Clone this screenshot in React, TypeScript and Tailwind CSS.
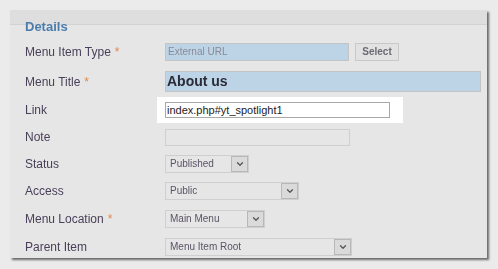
import { ChevronDown } from "lucide-react";

const font = { fontFamily: '"Liberation Sans", Arial, sans-serif' };

function Label({ text, req }: { text: string; req?: boolean }) {
  return (
    <div className="w-[140px] shrink-0 pl-[15px] text-[12px] text-[#483f58] blur-[0.5px]">
      {text}
      {req && <span className="ml-[4px] text-[#e0894a]">*</span>}
    </div>
  );
}

function Dropdown({ value, w }: { value: string; w: string }) {
  return (
    <div className={`flex h-[18px] items-stretch border border-[#cfcfcf] bg-[#e6e6e6] blur-[0.5px] ${w}`}>
      <div className="flex-1 pl-[4px] text-[10px] leading-[16px] text-[#5a5466]">{value}</div>
      <div className="flex w-[17px] items-center justify-center border border-[#b8b8b8] bg-[#dadada]">
        <ChevronDown className="size-[10px] text-[#555]" strokeWidth={3} />
      </div>
    </div>
  );
}

export default function App() {
  return (
    <div className="h-[269px] w-[498px] bg-[#ebebeb] pl-[10px] pt-[10px]" style={font}>
      <div className="h-[248px] w-[477px] bg-[#e6e6e6] shadow-[2px_2px_2px_rgba(0,0,0,0.55)]">
        {/* header band */}
        <div className="h-[15px] border-b border-[#d2d2d2] bg-[#dedede] blur-[0.5px]" />
        <div className="-mt-[5px] h-[18px] pl-[15px] text-[13px] font-bold leading-[13px] text-[#4a7dab] blur-[0.5px]">
          Details
        </div>

        {/* Menu Item Type */}
        <div className="flex h-[28px] items-center">
          <Label text="Menu Item Type" req />
          <div className="ml-[15px] flex items-center gap-[6px] blur-[0.5px]">
            <div className="h-[18px] w-[184px] border border-[#c4c4c4] bg-[#bcd4e6] pl-[2px] text-[10px] leading-[16px] text-[#8a8a98]">
              External URL
            </div>
            <div className="h-[18px] w-[44px] border border-[#c8c8c8] bg-[#e2e2e2] text-center text-[10px] font-bold leading-[16px] text-[#6a6a72]">
              Select
            </div>
          </div>
        </div>

        {/* Menu Title */}
        <div className="flex h-[31px] items-center">
          <Label text="Menu Title" req />
          <div className="ml-[15px] h-[21px] w-[316px] border border-[#c4c4c4] bg-[#bcd4e6] pl-[1px] text-[14px] font-bold leading-[19px] text-[#2b2b38] blur-[0.5px]">
            About us
          </div>
        </div>

        {/* Link (sharp) */}
        <div className="flex h-[26px] items-center">
          <Label text="Link" />
          <div className="ml-[7px] flex h-[26px] w-[246px] items-center bg-white pl-[8px]">
            <div className="h-[16px] w-[225px] border border-[#a8a8a8] bg-white pl-[1px] text-[11px] leading-[14px] text-[#222]">
              index.php#yt_spotlight1
            </div>
          </div>
        </div>

        {/* Note */}
        <div className="flex h-[28px] items-center">
          <Label text="Note" />
          <div className="ml-[15px] h-[17px] w-[185px] border border-[#cfcfcf] bg-[#e6e6e6] blur-[0.5px]" />
        </div>

        <div className="flex h-[26px] items-center">
          <Label text="Status" />
          <div className="ml-[15px]">
            <Dropdown value="Published" w="w-[84px]" />
          </div>
        </div>

        <div className="flex h-[28px] items-center">
          <Label text="Access" />
          <div className="ml-[15px]">
            <Dropdown value="Public" w="w-[134px]" />
          </div>
        </div>

        <div className="flex h-[28px] items-center">
          <Label text="Menu Location" req />
          <div className="ml-[15px]">
            <Dropdown value="Main Menu" w="w-[100px]" />
          </div>
        </div>

        <div className="flex h-[27px] items-center">
          <Label text="Parent Item" />
          <div className="ml-[15px]">
            <Dropdown value="Menu Item Root" w="w-[187px]" />
          </div>
        </div>
      </div>
    </div>
  );
}
